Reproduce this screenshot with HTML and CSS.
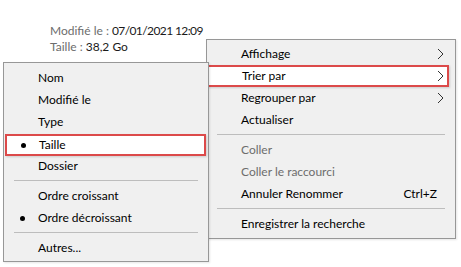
FILE: index.html
```html
<!DOCTYPE html>
<html lang="fr">
<head>
    <meta charset="UTF-8">
    <meta name="viewport" content="width=device-width, initial-scale=1.0">
    <title>Trier par</title>
    <link rel="stylesheet" href="styles.css">
</head>
<body>
    <div class="desktop">
        <div class="details">
            <div class="detail-line"><span class="label">Modifié le :</span> <span class="value date">07/01/2021 12:09</span></div>
            <div class="detail-line"><span class="label">Taille :</span> <span class="value">38,2 Go</span></div>
        </div>

        <!-- main context menu -->
        <div class="menu context-menu">
            <div class="menu-item has-sub">Affichage<svg class="chevron" viewBox="0 0 7 12"><path d="M1 1 L6 6 L1 11"/></svg></div>
            <div class="menu-item has-sub marked marked-wide">Trier par<svg class="chevron" viewBox="0 0 7 12"><path d="M1 1 L6 6 L1 11"/></svg></div>
            <div class="menu-item has-sub">Regrouper par<svg class="chevron" viewBox="0 0 7 12"><path d="M1 1 L6 6 L1 11"/></svg></div>
            <div class="menu-item">Actualiser</div>
            <div class="separator"></div>
            <div class="menu-item disabled">Coller</div>
            <div class="menu-item disabled">Coller le raccourci</div>
            <div class="menu-item">Annuler Renommer<span class="shortcut">Ctrl+Z</span></div>
            <div class="separator"></div>
            <div class="menu-item">Enregistrer la recherche</div>
        </div>

        <!-- "Trier par" submenu -->
        <div class="menu sub-menu">
            <div class="menu-item">Nom</div>
            <div class="menu-item">Modifié le</div>
            <div class="menu-item">Type</div>
            <div class="menu-item checked marked">Taille</div>
            <div class="menu-item">Dossier</div>
            <div class="separator"></div>
            <div class="menu-item">Ordre croissant</div>
            <div class="menu-item checked">Ordre décroissant</div>
            <div class="separator"></div>
            <div class="menu-item">Autres...</div>
        </div>
    </div>
</body>
</html>
```

FILE: styles.css
```css
body {
    margin: 0;
    background-color: #fff;
    font-family: Lato, "Noto Sans", sans-serif;
    font-size: 12px;
    color: #000;
}
.desktop {
    position: relative;
    width: 461px;
    height: 267px;
    overflow: hidden;
}
.details {
    padding: 23px 0 0 50px;
}
.detail-line {
    line-height: 16px;
    height: 16px;
    white-space: nowrap;
}
.label {
    color: #6d6d6d;
}
.value {
    color: #1a1a1a;
}
.date {
    letter-spacing: -0.6px;
}
.menu {
    position: absolute;
    box-sizing: border-box;
    background-color: #f0f0f0;
    border: 1px solid #979797;
    padding: 3px 0;
    box-shadow: 1px 1px 2px rgba(0, 0, 0, 0.1);
}
.context-menu {
    left: 206px;
    top: 39px;
    width: 250px;
}
.sub-menu {
    left: 3px;
    top: 62px;
    width: 206px;
    padding-top: 4px;
    padding-bottom: 2px;
}
.menu-item {
    position: relative;
    box-sizing: border-box;
    height: 22px;
    line-height: 22px;
    padding-left: 34px;
    white-space: nowrap;
}
.menu-item.disabled {
    color: #6d6d6d;
}
.chevron {
    position: absolute;
    right: 11px;
    top: 5px;
    width: 7px;
    height: 12px;
    fill: none;
    stroke: #333;
    stroke-width: 1;
}
.shortcut {
    position: absolute;
    right: 18px;
}
.checked::before {
    content: "";
    position: absolute;
    left: 16px;
    top: 9px;
    width: 5px;
    height: 5px;
    border-radius: 50%;
    background-color: #000;
}
.marked {
    background-color: #fff;
    border: 2px solid #dc4a4a;
    line-height: 18px;
    padding-left: 32px;
    margin: 1px 2px -1px 1px;
    box-shadow: 1px 1px 2px rgba(0, 0, 0, 0.15);
}
.marked.checked::before {
    left: 14px;
    top: 7px;
}
.marked-wide {
    margin: 0 6px 0 0;
    padding-left: 33px;
}
.marked-wide .chevron {
    right: 3px;
    top: 3px;
}
.separator {
    height: 1px;
    margin: 3px 10px 4px 10px;
    background-color: #bdbdbd;
}
```
